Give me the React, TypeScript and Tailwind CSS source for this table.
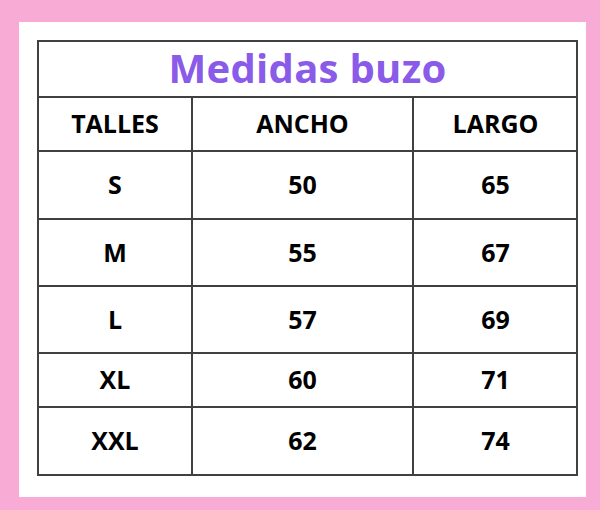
import React from "react";

const rows: [string, string, string, number][] = [
  ["S", "50", "65", 68],
  ["M", "55", "67", 67],
  ["L", "57", "69", 67],
  ["XL", "60", "71", 54],
  ["XXL", "62", "74", 66],
];

export default function App() {
  return (
    <div className="w-[600px] h-[510px] bg-[#f8abd4] pl-[19px] pr-[14px] pt-[22px] pb-[13px]" style={{ fontFamily: '"Open Sans", "Liberation Sans", sans-serif' }}>
      <div className="w-full h-full bg-white pl-[18px] pr-[8px] pt-[18px]">
        <div className="w-[541px] border-2 border-[#404040] text-black font-bold">
          <div className="h-[56px] flex items-center justify-center border-b-2 border-[#404040] text-[#8a5ae8] text-[40px] leading-none pb-[2px] tracking-[0.3px]">
            Medidas buzo
          </div>
          <div className="grid grid-cols-[154px_221px_163px] h-[54px] border-b-2 border-[#404040] text-[25px]">
            <div className="flex items-center justify-center border-r-2 border-[#404040]">TALLES</div>
            <div className="flex items-center justify-center border-r-2 border-[#404040]">ANCHO</div>
            <div className="flex items-center justify-center">LARGO</div>
          </div>
          {rows.map(([t, a, l, h], i) => (
            <div
              key={t}
              className={`grid grid-cols-[154px_221px_163px] text-[25px] ${i < rows.length - 1 ? "border-b-2 border-[#404040]" : ""}`}
              style={{ height: h }}
            >
              <div className="flex items-center justify-center border-r-2 border-[#404040]">{t}</div>
              <div className="flex items-center justify-center border-r-2 border-[#404040]">{a}</div>
              <div className="flex items-center justify-center">{l}</div>
            </div>
          ))}
        </div>
      </div>
    </div>
  );
}
